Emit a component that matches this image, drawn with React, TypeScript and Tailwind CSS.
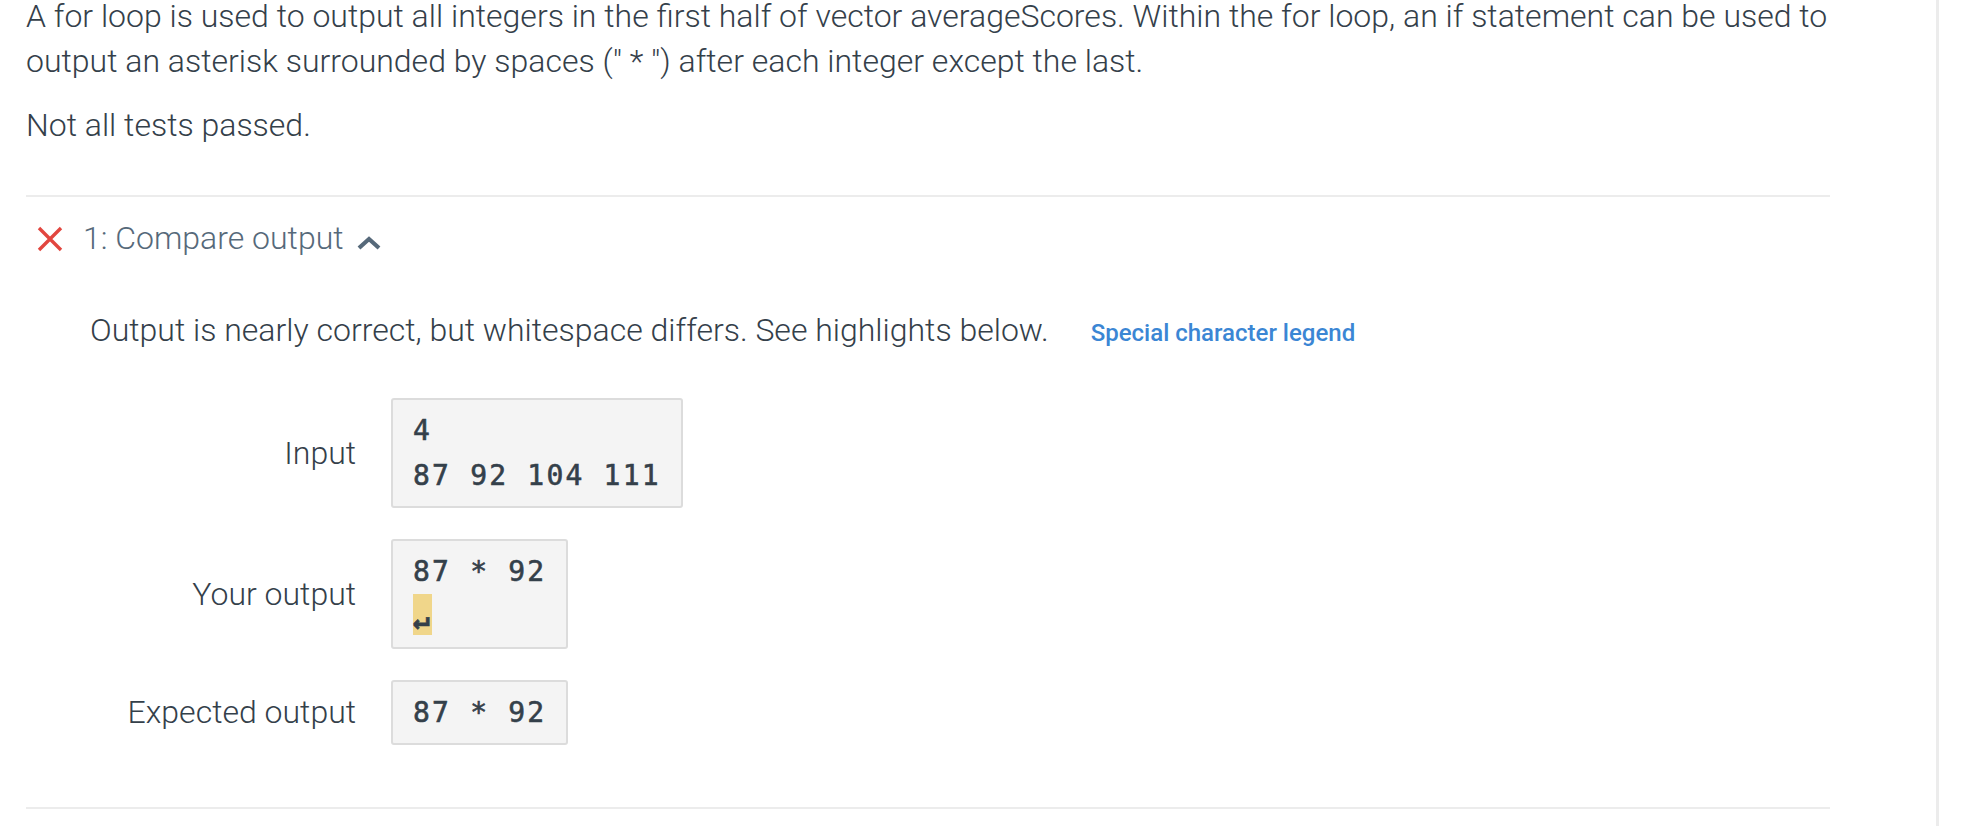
import { ReactNode } from 'react'

const body = "font-['Roboto',_'Liberation_Sans',_sans-serif]"
const mono = "font-['DejaVu_Sans_Mono',_'Liberation_Mono',_monospace]"

// ─── Output box ───────────────────────────────────────────────────────────────

function CodeBox({ children }: { children: ReactNode }) {
  return (
    <div
      className={`${mono} rounded-[3px] border-2 border-[#dcdcdc] bg-[#f4f4f4] px-[20px] pt-[8px] pb-[8px] text-[28px] leading-[45px] tracking-[2.2px] whitespace-pre text-[#34404a] [-webkit-text-stroke:0.6px_#34404a]`}
    >
      {children}
    </div>
  )
}

function Row({ label, children }: { label: string; children: ReactNode }) {
  return (
    <div className="flex items-center">
      <div className="w-[330px] text-right text-[32px] leading-[45px] text-[#34404a]">{label}</div>
      <div className="ml-[35px]">{children}</div>
    </div>
  )
}

// ─── Page ─────────────────────────────────────────────────────────────────────

export default function App() {
  return (
    <div className={`${body} flex h-[826px] w-[1962px] overflow-hidden bg-white font-light`}>
      <div className="w-[1936px] shrink-0 pl-[26px] pr-[106px]">
        <p className="-mt-[6px] text-[32px] leading-[45px] text-[#34404a]">
          A for loop is used to output all integers in the first half of vector averageScores. Within the for loop, an if
          statement can be used to output an asterisk surrounded by spaces (" * ") after each integer except the last.
        </p>
        <p className="mt-[19px] text-[32px] leading-[45px] text-[#34404a]">Not all tests passed.</p>

        <div className="mt-[47px] h-[2px] bg-[#ececec]" />

        {/* Test case header */}
        <div className="mt-[19px] flex items-center">
          <svg width="26" height="26" viewBox="0 0 26 26" className="ml-[11px]">
            <path d="M2 2 L24 24 M24 2 L2 24" stroke="#e2463f" strokeWidth="3.4" strokeLinecap="butt" fill="none" />
          </svg>
          <span className="ml-[20px] text-[32px] leading-[45px] text-[#56697a]">1: Compare output</span>
          <svg width="26" height="16" viewBox="0 0 26 16" className="ml-[12px] mt-[8px]">
            <path d="M3 13 L13 4 L23 13" stroke="#56697a" strokeWidth="4.2" fill="none" strokeLinejoin="miter" />
          </svg>
        </div>

        <div className="ml-[64px] mt-[47px] flex items-baseline text-[32px] leading-[45px] text-[#34404a]">
          <span>Output is nearly correct, but whitespace differs. See highlights below.</span>
          <span className="ml-[42px] text-[24px] font-medium text-[#3b86d4]">Special character legend</span>
        </div>

        <div className="mt-[42px] flex flex-col gap-[31px]">
          <Row label="Input">
            <CodeBox>
              {'4\n87 92 104 111'}
            </CodeBox>
          </Row>
          <Row label="Your output">
            <CodeBox>
              {'87 * 92\n'}
              <span className="inline-block h-[41px] w-[19px] bg-[#f0d68a] align-top font-bold leading-[52px] tracking-normal">
                ↵
              </span>
            </CodeBox>
          </Row>
          <Row label="Expected output">
            <CodeBox>87 * 92</CodeBox>
          </Row>
        </div>

        <div className="mt-[62px] h-[2px] bg-[#ececec]" />
      </div>
      <div className="flex-1 border-l-[3px] border-[#ececec]" />
    </div>
  )
}
